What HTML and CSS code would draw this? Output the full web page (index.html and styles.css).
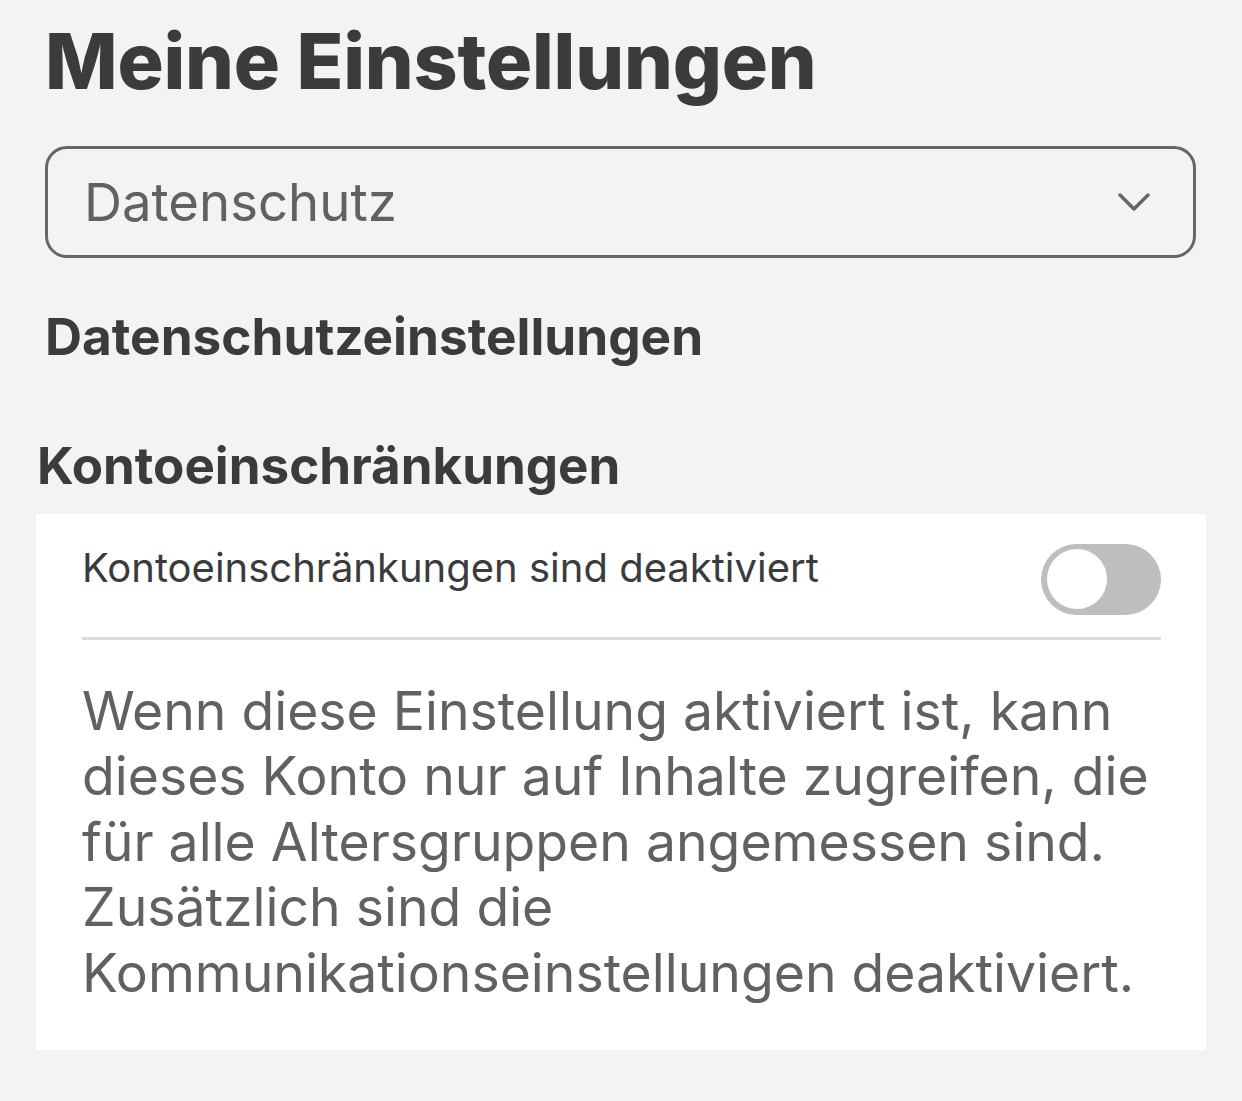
FILE: index.html
```html
<!DOCTYPE html>
<html lang="de">
<head>
  <meta charset="UTF-8" />
  <meta name="viewport" content="width=device-width, initial-scale=1.0"/>
  <title>Meine Einstellungen</title>
  <link rel="stylesheet" href="styles.css">
</head>
<body>

  <div class="page">
    <h1>Meine Einstellungen</h1>

    <div class="select">
      <span class="select-value">Datenschutz</span>
      <svg class="chevron" width="32" height="18" viewBox="0 0 32 18">
        <path d="M2 2 L16 16 L30 2" fill="none" stroke="#656668" stroke-width="3.5" stroke-linecap="round" stroke-linejoin="round"/>
      </svg>
    </div>

    <h2 class="section-title">Datenschutzeinstellungen</h2>

    <h3 class="group-title">Kontoeinschränkungen</h3>

    <div class="card">
      <div class="setting-row">
        <span class="setting-label">Kontoeinschränkungen sind deaktiviert</span>
        <span class="toggle"><span class="knob"></span></span>
      </div>
      <div class="divider"></div>
      <p class="description">Wenn diese Einstellung aktiviert ist, kann dieses Konto nur auf Inhalte zugreifen, die für alle Altersgruppen angemessen sind. Zusätzlich sind die Kommunikationseinstellungen deaktiviert.</p>
    </div>
  </div>

</body>
</html>
```
FILE: styles.css
```css
* { box-sizing: border-box; }
body {
  margin: 0;
  background: #f2f3f5;
  font-family: Inter, "Noto Sans", sans-serif;
  color: #393b3d;
}
.page {
  padding: 15px 46px 0 45px;
}

h1 {
  margin: 0;
  font-size: 77px;
  line-height: 92px;
  font-weight: 800;
  letter-spacing: -0.2px;
}

.select {
  display: flex;
  align-items: center;
  justify-content: space-between;
  height: 112px;
  margin-top: 39px;
  padding: 0 43px 0 36px;
  border: 3px solid #656668;
  border-radius: 22px;
}
.select-value {
  font-size: 52.7px;
  line-height: 1;
  color: #606162;
}
.chevron { display: block; }

.section-title {
  margin: 48px 0 0;
  font-size: 51.3px;
  line-height: 61.6px;
  font-weight: 700;
}
.group-title {
  margin: 67px 0 0 -8px;
  font-size: 51.1px;
  line-height: 61.3px;
  font-weight: 700;
}

.card {
  margin: 18px -10px 0 -9px;
  padding: 30px 45px 45px 46px;
  background: #fff;
}
.setting-row {
  display: flex;
  align-items: flex-start;
  justify-content: space-between;
}
.setting-label {
  font-size: 40px;
  line-height: 48px;
  color: #393b3d;
}
.toggle {
  display: flex;
  align-items: center;
  width: 120px;
  height: 71px;
  padding: 0 6px;
  border-radius: 36px;
  background: #bdbebe;
}
.knob {
  width: 60px;
  height: 60px;
  border-radius: 50%;
  background: #fff;
}
.divider {
  height: 3px;
  margin-top: 22px;
  background: #dcdcdc;
}
.description {
  margin: 38px 0 0;
  font-size: 53.5px;
  line-height: 65.5px;
  color: #606162;
}
```
